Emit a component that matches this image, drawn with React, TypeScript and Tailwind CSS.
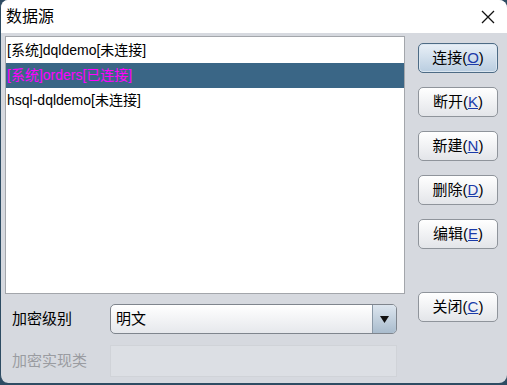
const font = { fontFamily: '"Liberation Sans", "Noto Sans CJK SC", sans-serif' };

function Btn({ label, k, primary }: { label: string; k: string; primary?: boolean }) {
  return (
    <button
      className={
        'w-[80px] h-[30px] rounded-[5px] border text-[15px] text-black flex items-center justify-center ' +
        (primary
          ? 'border-[#4d6b85] bg-gradient-to-b from-[#e9f0f7] to-[#b9cde0] shadow-[inset_0_0_0_1px_#dbe6f0]'
          : 'border-[#8f949b] bg-gradient-to-b from-[#ffffff] to-[#e3e5e9]')
      }
    >
      {label}(<span className="underline text-[#1a3aa8]">{k}</span>)
    </button>
  );
}

export default function App() {
  const rows = [
    { t: '[系统]dqldemo[未连接]', sel: false },
    { t: '[系统]orders[已连接]', sel: true },
    { t: 'hsql-dqldemo[未连接]', sel: false },
  ];
  return (
    <div className="w-[507px] h-[385px] bg-[#2e4c63]" style={font}>
      <div className="w-[507px] h-[383px] bg-[#d6d9df] rounded-t-[8px] rounded-b-[8px] border-l border-[#2e4c63] overflow-hidden flex flex-col">
        <div className="h-[33px] bg-white flex items-center justify-between pl-[5px] pr-[12px]">
          <span className="text-[16px] text-black">数据源</span>
          <svg width="14" height="14" viewBox="0 0 14 14">
            <path d="M1 1L13 13M13 1L1 13" stroke="#111" strokeWidth="1.3" />
          </svg>
        </div>
        <div className="flex pl-[4px] pt-[3px]">
          <div className="w-[400px] flex flex-col">
            <div className="h-[258px] bg-white border border-[#a3a6ab] pt-[1px]">
              {rows.map((r) => (
                <div
                  key={r.t}
                  className={
                    'h-[25px] flex items-center pl-[1px] text-[14px] ' +
                    (r.sel ? 'bg-[#3a6686] text-[#ff00ff]' : 'text-black')
                  }
                >
                  {r.t}
                </div>
              ))}
            </div>
            <div className="flex items-center mt-[10px] h-[30px]">
              <span className="w-[105px] pl-[7px] text-[15px] text-black">加密级别</span>
              <div className="w-[287px] h-[30px] rounded-[5px] border border-[#7f858d] bg-gradient-to-b from-white to-[#e6e8ec] flex items-center">
                <span className="flex-1 pl-[5px] text-[15px] text-black">明文</span>
                <div className="w-[24px] h-full rounded-r-[4px] border-l border-[#8a98a6] bg-gradient-to-b from-[#dde6ef] to-[#a9bccd] flex items-center justify-center">
                  <svg width="9" height="7" viewBox="0 0 9 7">
                    <path d="M0 0H9L4.5 7Z" fill="#111" />
                  </svg>
                </div>
              </div>
            </div>
            <div className="flex items-center mt-[11px] h-[32px]">
              <span className="w-[105px] pl-[7px] text-[15px] text-[#9a9ca1]">加密实现类</span>
              <div className="w-[287px] h-[32px] bg-[#dcdfe4] border border-[#d0d3d8]" />
            </div>
          </div>
          <div className="ml-[13px] pt-[7px] flex flex-col gap-[14px]">
            <Btn label="连接" k="O" primary />
            <Btn label="断开" k="K" />
            <Btn label="新建" k="N" />
            <Btn label="删除" k="D" />
            <Btn label="编辑" k="E" />
            <div className="mt-[29px]">
              <Btn label="关闭" k="C" />
            </div>
          </div>
        </div>
      </div>
    </div>
  );
}
